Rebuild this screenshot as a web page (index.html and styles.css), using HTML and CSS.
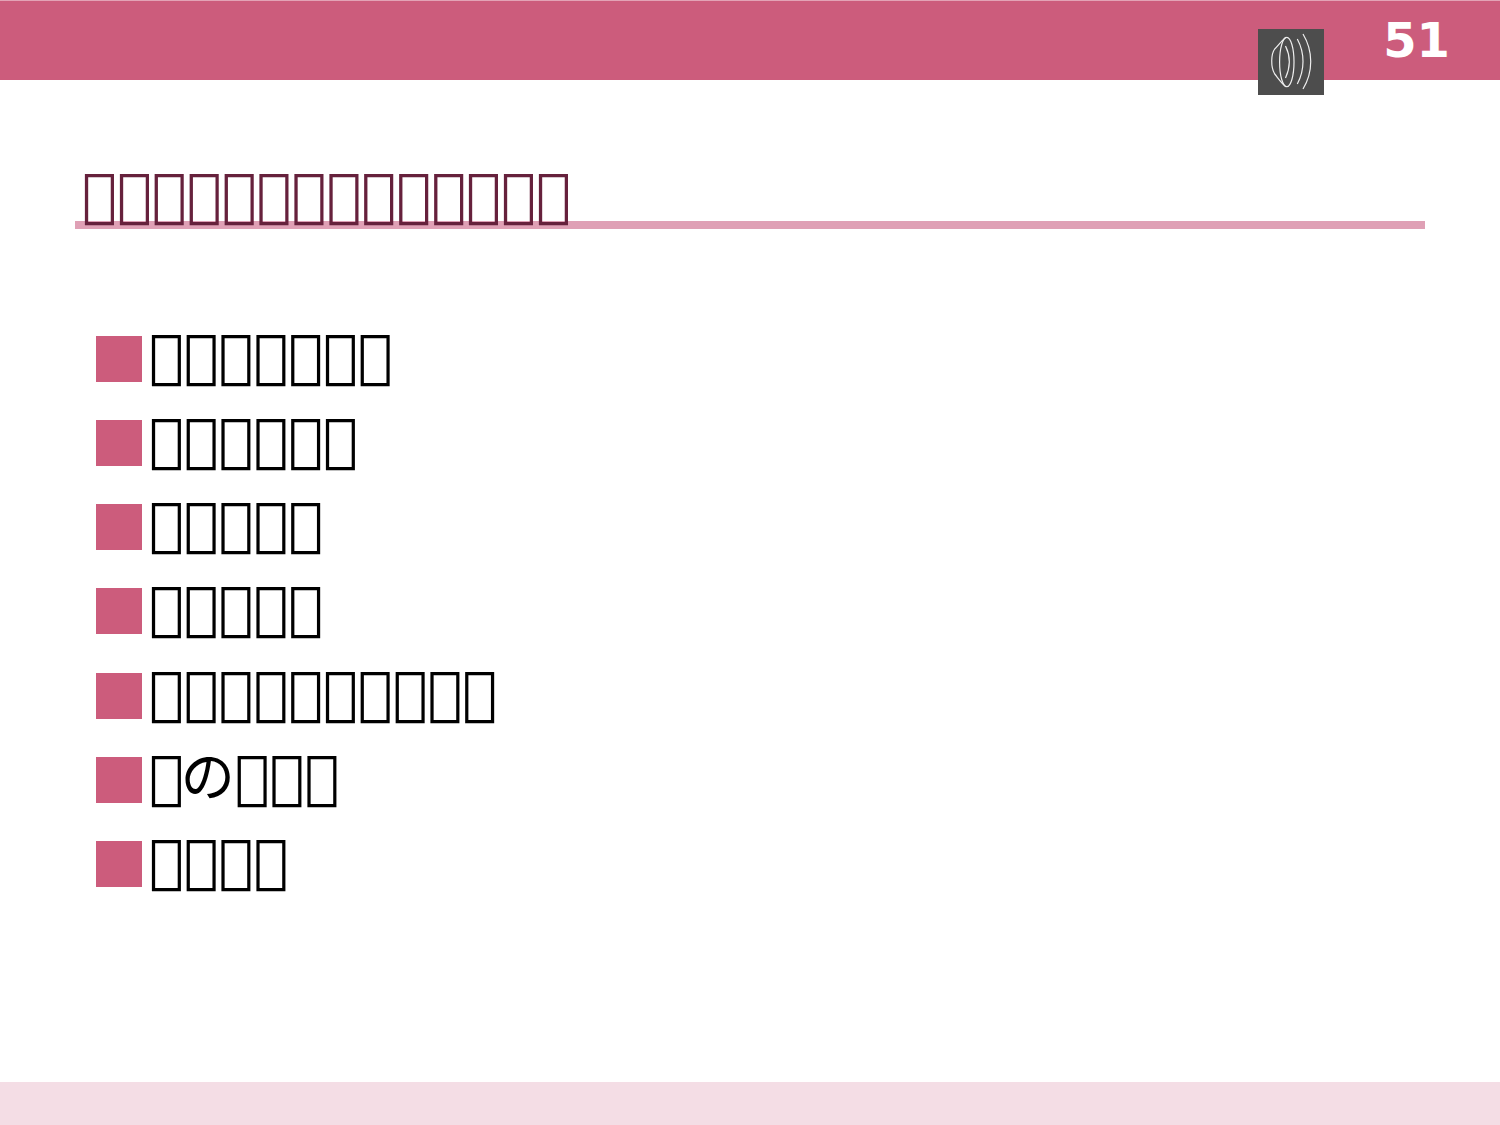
FILE: index.html
```html
<!DOCTYPE html>
<html lang="ja">
<head>
<meta charset="utf-8">
<title>51</title>
<link rel="stylesheet" href="styles.css">
</head>
<body>
<div class="slide">
  <header class="top-bar">
    <div class="sound-icon">
      <svg width="66" height="66" viewBox="0 0 66 66" fill="none" stroke="#eeeeee" stroke-width="1.2">
        <ellipse cx="28.8" cy="33" rx="7.2" ry="24.7"/>
        <path d="M27.5 17 C32.5 27 32.5 38 27.5 49"/>
        <path d="M28 8.3 C24 11 20 17 16.7 20 C13 25 12.5 38 16.7 45 C20 49 24 55 28 57.7"/>
        <path d="M39.3 10 C46.9 24 46.9 41 39.3 55"/>
        <path d="M45 5 C55.3 22 55.3 43 45 60"/>
      </svg>
    </div>
    <div class="page-number">51</div>
  </header>
  <main class="content">
    <h1 class="title">&#xE000;&#xE000;&#xE000;&#xE000;&#xE000;&#xE000;&#xE000;&#xE000;&#xE000;&#xE000;&#xE000;&#xE000;&#xE000;&#xE000;</h1>
    <ul class="items">
      <li class="item"><span class="bullet"></span><span>&#xE000;&#xE000;&#xE000;&#xE000;&#xE000;&#xE000;&#xE000;</span></li>
      <li class="item"><span class="bullet"></span><span>&#xE000;&#xE000;&#xE000;&#xE000;&#xE000;&#xE000;</span></li>
      <li class="item"><span class="bullet"></span><span>&#xE000;&#xE000;&#xE000;&#xE000;&#xE000;</span></li>
      <li class="item"><span class="bullet"></span><span>&#xE000;&#xE000;&#xE000;&#xE000;&#xE000;</span></li>
      <li class="item"><span class="bullet"></span><span>&#xE000;&#xE000;&#xE000;&#xE000;&#xE000;&#xE000;&#xE000;&#xE000;&#xE000;&#xE000;</span></li>
      <li class="item"><span class="bullet"></span><span>&#xE000;<span class="no">の</span>&#xE000;&#xE000;&#xE000;</span></li>
      <li class="item"><span class="bullet"></span><span>&#xE000;&#xE000;&#xE000;&#xE000;</span></li>
    </ul>
  </main>
  <footer class="bottom-bar"></footer>
</div>
</body>
</html>
```
FILE: styles.css
```css
* { box-sizing: border-box; }
html, body { margin: 0; padding: 0; background: #fff; }
.slide {
  position: relative;
  width: 1500px;
  height: 1125px;
  display: flex;
  flex-direction: column;
  overflow: hidden;
  font-family: "DejaVu Sans", "Noto Sans CJK JP", sans-serif;
}
.top-bar {
  flex: none;
  height: 80px;
  background: #cc5c7c;
  border-top: 1px solid #e3a3b6;
  display: flex;
  justify-content: flex-end;
  padding-right: 50px;
}
.page-number {
  color: #fff;
  font-weight: 700;
  font-size: 48px;
  line-height: 78px;
}
.sound-icon {
  position: absolute;
  left: 1258px;
  top: 29px;
  width: 66px;
  height: 66px;
  background: #4d4d4d;
}
.sound-icon svg { display: block; }
.content {
  flex: 1;
  padding: 80px 75px 0;
}
.title {
  margin: 0;
  height: 69px;
  padding-left: 7px;
  border-bottom: 8px solid #dfa0b5;
  color: #66213c;
  font-size: 58.2px;
  font-weight: 400;
  line-height: 70px;
  white-space: nowrap;
}
.items {
  list-style: none;
  margin: 0;
  padding: 106.8px 0 0 21px;
  display: grid;
  grid-auto-rows: 84.2px;
}
.item {
  display: flex;
  gap: 7px;
  color: #000;
  font-size: 58px;
  line-height: 40px;
  white-space: nowrap;
}
.no {
  font-size: 54px;
  margin-left: -3px;
}
.bullet {
  flex: none;
  width: 46px;
  height: 46px;
  background: #cc5c7c;
}
.bottom-bar {
  flex: none;
  height: 43px;
  background: #f4dde5;
}
```
